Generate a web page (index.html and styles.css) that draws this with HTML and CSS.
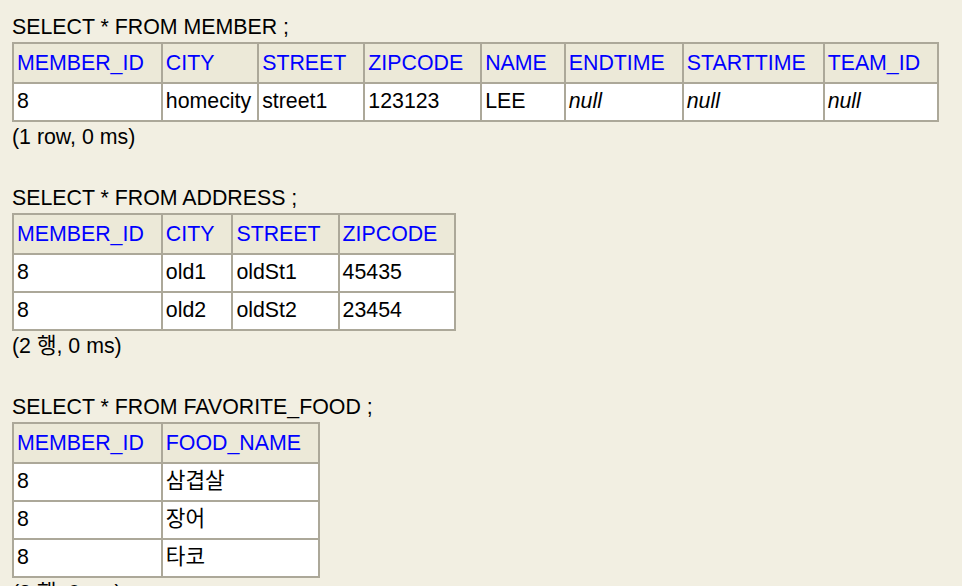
FILE: index.html
```html
<!DOCTYPE html>
<html lang="ko">
<head>
<meta charset="utf-8">
<title>H2 Result</title>
<link rel="stylesheet" href="styles.css">
</head>
<body>
<div class="line">SELECT * FROM MEMBER ;</div>
<table class="result">
  <tr><th>MEMBER_ID</th><th>CITY</th><th>STREET</th><th>ZIPCODE</th><th>NAME</th><th>ENDTIME</th><th>STARTTIME</th><th>TEAM_ID</th></tr>
  <tr><td>8</td><td>homecity</td><td>street1</td><td>123123</td><td>LEE</td><td class="null">null</td><td class="null">null</td><td class="null">null</td></tr>
</table>
<div class="line">(1 row, 0 ms)</div>
<div class="line blank"></div>
<div class="line">SELECT * FROM ADDRESS ;</div>
<table class="result">
  <tr><th>MEMBER_ID</th><th>CITY</th><th>STREET</th><th>ZIPCODE</th></tr>
  <tr><td>8</td><td>old1</td><td>oldSt1</td><td>45435</td></tr>
  <tr><td>8</td><td>old2</td><td>oldSt2</td><td>23454</td></tr>
</table>
<div class="line">(2 행, 0 ms)</div>
<div class="line blank"></div>
<div class="line">SELECT * FROM FAVORITE_FOOD ;</div>
<table class="result">
  <tr><th>MEMBER_ID</th><th>FOOD_NAME</th></tr>
  <tr><td>8</td><td>삼겹살</td></tr>
  <tr><td>8</td><td>장어</td></tr>
  <tr><td>8</td><td>타코</td></tr>
</table>
<div class="line">(3 행, 0 ms)</div>
</body>
</html>
```

FILE: styles.css
```css
html {
  overflow: hidden;
  background: #f2efe2;
}

body {
  margin: 11.67px 12px 12px 12px;
  background: #f2efe2;
  color: #000;
  font-family: "Liberation Sans", Arial, "Noto Sans CJK KR", sans-serif;
  font-size: 21.33px;
  line-height: 30.33px;
}

.line {
  height: 30.33px;
  white-space: nowrap;
}

.result {
  border-collapse: collapse;
  border: 2px solid #aca899;
  white-space: nowrap;
}

.result th,
.result td {
  border: 2px solid #aca899;
  text-align: left;
  vertical-align: top;
  line-height: 30px;
}

.result th {
  background: #ece9d8;
  color: #0000ff;
  font-weight: normal;
  padding: 4px 17px 4px 3px;
}

.result td {
  background: #ffffff;
  padding: 2px 6px 4px 3px;
}

.result td.null {
  font-style: italic;
}
```
